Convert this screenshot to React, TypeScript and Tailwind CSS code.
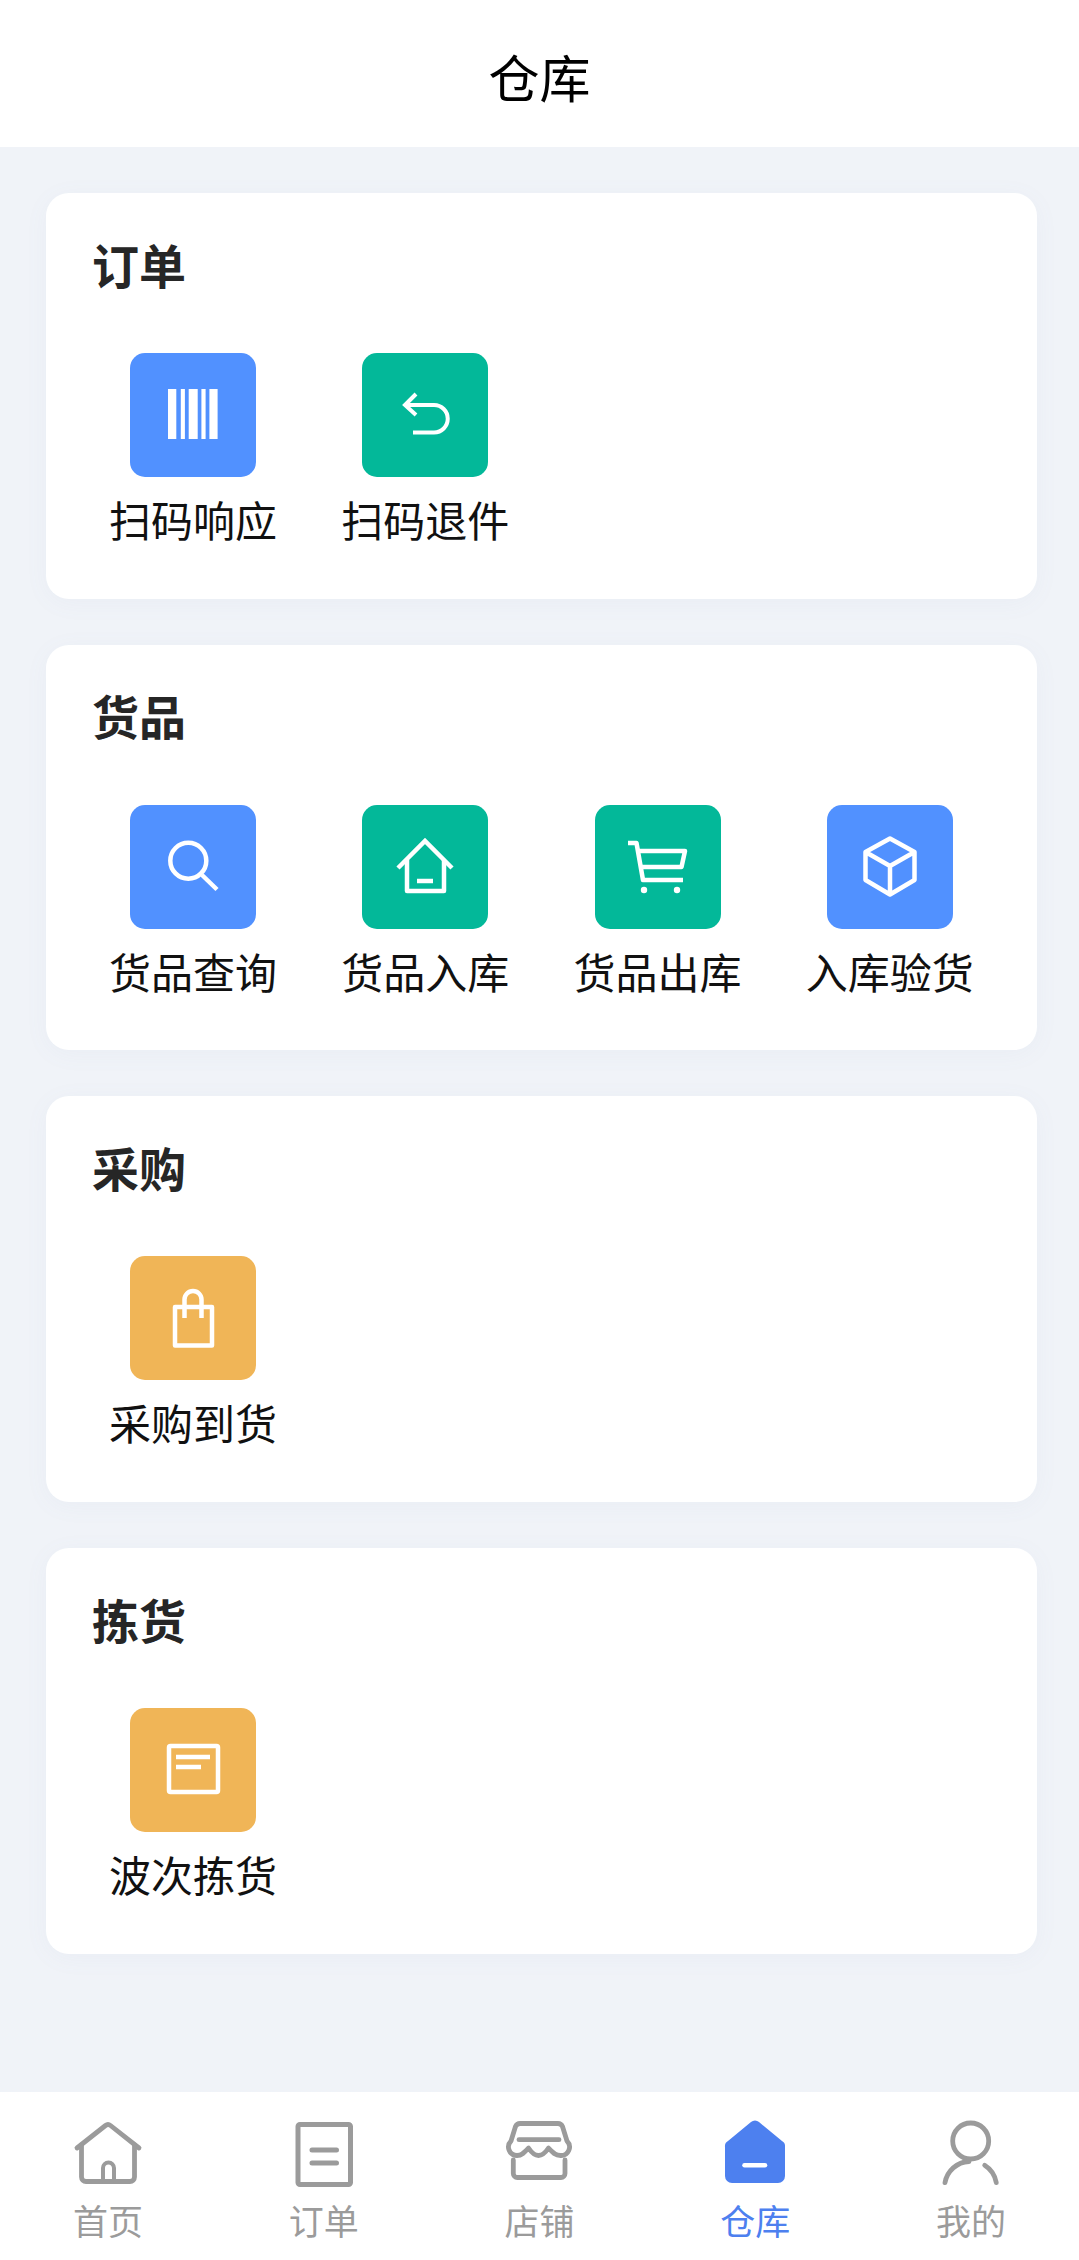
import React from "react";

const CJK = `font-['Noto_Sans_CJK_SC','Noto_Sans',sans-serif]`;

const tileColors = {
  blue: "bg-[#5191ff]",
  green: "bg-[#03b899]",
  orange: "bg-[#f0b557]",
};

const TileSvg = ({ children }: { children: React.ReactNode }) => (
  <svg
    viewBox="0 0 126 124"
    className="h-full w-full"
    fill="none"
    stroke="#fff"
    strokeWidth="4.500"
  >
    {children}
  </svg>
);

const BarcodeIcon = () => (
  <TileSvg>
    <g fill="#fff" stroke="none">
      <rect x="38" y="36" width="8.3" height="50" />
      <rect x="50.8" y="36" width="4.1" height="50" />
      <rect x="58.7" y="36" width="9" height="50" />
      <rect x="71.4" y="36" width="4.2" height="50" />
      <rect x="79.4" y="36" width="8.2" height="50" />
    </g>
  </TileSvg>
);

const ReturnIcon = () => (
  <TileSvg>
    <path d="M54 41 43 52l11 10M43 52h29a13.75 13.75 0 0 1 0 27.5H51" strokeWidth="4" />
  </TileSvg>
);

const SearchIcon = () => (
  <TileSvg>
    <circle cx="58.3" cy="55.7" r="18" />
    <path d="M72 70l15 14.500" />
  </TileSvg>
);

const HouseIcon = () => (
  <TileSvg>
    <path d="M36 63l27-27 27 27" />
    <path d="M45 55v31h37V55" strokeLinejoin="round" />
    <path d="M55 76h16" />
  </TileSvg>
);

const CartIcon = () => (
  <TileSvg>
    <path d="M33 38h8.500l6.500 37h40" strokeLinejoin="round" />
    <path d="M43.500 46H90l-3.500 16H46.500" strokeLinejoin="round" />
    <circle cx="49" cy="85" r="3.200" fill="#fff" stroke="none" />
    <circle cx="82" cy="85" r="3.200" fill="#fff" stroke="none" />
  </TileSvg>
);

const BoxIcon = () => (
  <TileSvg>
    <path d="M63 33.500 87.500 47v28L63 89.500 38.500 75V47zM38.500 47 63 61l24.500-14M63 61v28.500" strokeLinejoin="round" />
  </TileSvg>
);

const BagIcon = () => (
  <TileSvg>
    <rect x="45" y="51" width="37" height="38.500" strokeLinejoin="round" />
    <path d="M54.500 62V43.500a8.500 8.500 0 0 1 17 0V62" />
  </TileSvg>
);

const ListIcon = () => (
  <TileSvg>
    <rect x="39" y="38" width="49" height="46" rx="1.500" />
    <path d="M46 49h34M46 59h25" />
  </TileSvg>
);

const sections = [
  {
    title: "订单",
    items: [
      { label: "扫码响应", color: tileColors.blue, icon: <BarcodeIcon /> },
      { label: "扫码退件", color: tileColors.green, icon: <ReturnIcon /> },
    ],
  },
  {
    title: "货品",
    items: [
      { label: "货品查询", color: tileColors.blue, icon: <SearchIcon /> },
      { label: "货品入库", color: tileColors.green, icon: <HouseIcon /> },
      { label: "货品出库", color: tileColors.green, icon: <CartIcon /> },
      { label: "入库验货", color: tileColors.blue, icon: <BoxIcon /> },
    ],
  },
  {
    title: "采购",
    items: [{ label: "采购到货", color: tileColors.orange, icon: <BagIcon /> }],
  },
  {
    title: "拣货",
    items: [{ label: "波次拣货", color: tileColors.orange, icon: <ListIcon /> }],
  },
];

const NavSvg = ({ children, color = "#9b9b9b" }: { children: React.ReactNode; color?: string }) => (
  <svg
    viewBox="0 0 90 72"
    className="h-[72px] w-[90px]"
    fill="none"
    stroke={color}
    strokeWidth="4.800"
    strokeLinecap="round"
    strokeLinejoin="round"
  >
    {children}
  </svg>
);

const tabs = [
  {
    label: "首页",
    icon: (
      <NavSvg>
        <path d="M14 31 42.500 8.500a4 4 0 0 1 5 0L76 31" />
        <path d="M18.500 28v32a4.500 4.500 0 0 0 4.500 4.500h44a4.500 4.500 0 0 0 4.500-4.500V28" />
        <path d="M40 64V51a5.500 5.500 0 0 1 11 0v13" strokeWidth="4" />
      </NavSvg>
    ),
  },
  {
    label: "订单",
    icon: (
      <NavSvg>
        <rect x="19" y="7.500" width="52.500" height="60" rx="2" strokeWidth="5" />
        <path d="M33 33h24.500M33 46h24.500" strokeWidth="5" />
      </NavSvg>
    ),
  },
  {
    label: "店铺",
    icon: (
      <NavSvg>
        <path d="M26 6.500h38a5 5 0 0 1 4.500 3L73 24a8.500 8.500 0 0 1-6.500 14.500c-5 0-8-3-12-7.500-3 4.500-6 7.500-10 7.500s-7-3-10-7.500c-4 4.500-7 7.500-11.500 7.500A8.500 8.500 0 0 1 17 24L21.500 9.500a5 5 0 0 1 4.500-3z" />
        <path d="M19.300 43v13.500a4 4 0 0 0 4 4h43.700a4 4 0 0 0 4-4V43" />
        <path d="M25 22.700h40" />
      </NavSvg>
    ),
  },
  {
    label: "仓库",
    active: true,
    icon: (
      <NavSvg color="#4d80ef">
        <path
          d="M41 5a6 6 0 0 1 8 0l23 19a6 6 0 0 1 3 6v29a7 7 0 0 1-7 7H22a7 7 0 0 1-7-7V30a6 6 0 0 1 3-6z"
          fill="#4d80ef"
          stroke="none"
        />
        <path d="M34.500 48.300H55" stroke="#fff" strokeWidth="4.500" />
      </NavSvg>
    ),
  },
  {
    label: "我的",
    icon: (
      <NavSvg>
        <circle cx="44.700" cy="24" r="18" />
        <path d="M19 65.700C21 54 31 45 43 44.500M58.700 48.300C64.500 52 69 58 70.300 65.700" />
      </NavSvg>
    ),
  },
];

export default function App() {
  return (
    <div className={`flex h-[2260px] w-[1079px] flex-col overflow-hidden bg-[#f0f3f8] ${CJK}`}>
      <header className="flex h-[147px] shrink-0 items-center justify-center bg-white pt-[6px] text-[51px] text-black">
        仓库
      </header>

      <main className="flex flex-1 flex-col gap-[46px] pt-[46px] pr-[42px] pl-[46px]">
        {sections.map((section) => (
          <section
            key={section.title}
            className="h-[405.700px] rounded-[23px] bg-white px-[31px] shadow-[0_4px_24px_rgba(120,140,180,0.05)]"
          >
            <h2 className="mb-[14px] flex h-[146px] items-center pb-[6px] pl-[15px] text-[47px] leading-none font-bold text-[#262626]">
              {section.title}
            </h2>
            <div className="grid grid-cols-4">
              {section.items.map((item) => (
                <div key={item.label} className="flex flex-col items-center">
                  <div className={`h-[124px] w-[126px] rounded-[15px] ${item.color}`}>{item.icon}</div>
                  <span className="mt-[12px] text-[42px] leading-[60px] whitespace-nowrap text-[#111]">
                    {item.label}
                  </span>
                </div>
              ))}
            </div>
          </section>
        ))}
      </main>

      <nav className="grid h-[168px] shrink-0 grid-cols-5 bg-white">
        {tabs.map((tab) => (
          <div key={tab.label} className="flex flex-col items-center pt-[25px]">
            {tab.icon}
            <span className={`mt-[7px] text-[35px] leading-[48px] ${tab.active ? "text-[#4d80ef]" : "text-[#9b9b9b]"}`}>
              {tab.label}
            </span>
          </div>
        ))}
      </nav>
    </div>
  );
}
